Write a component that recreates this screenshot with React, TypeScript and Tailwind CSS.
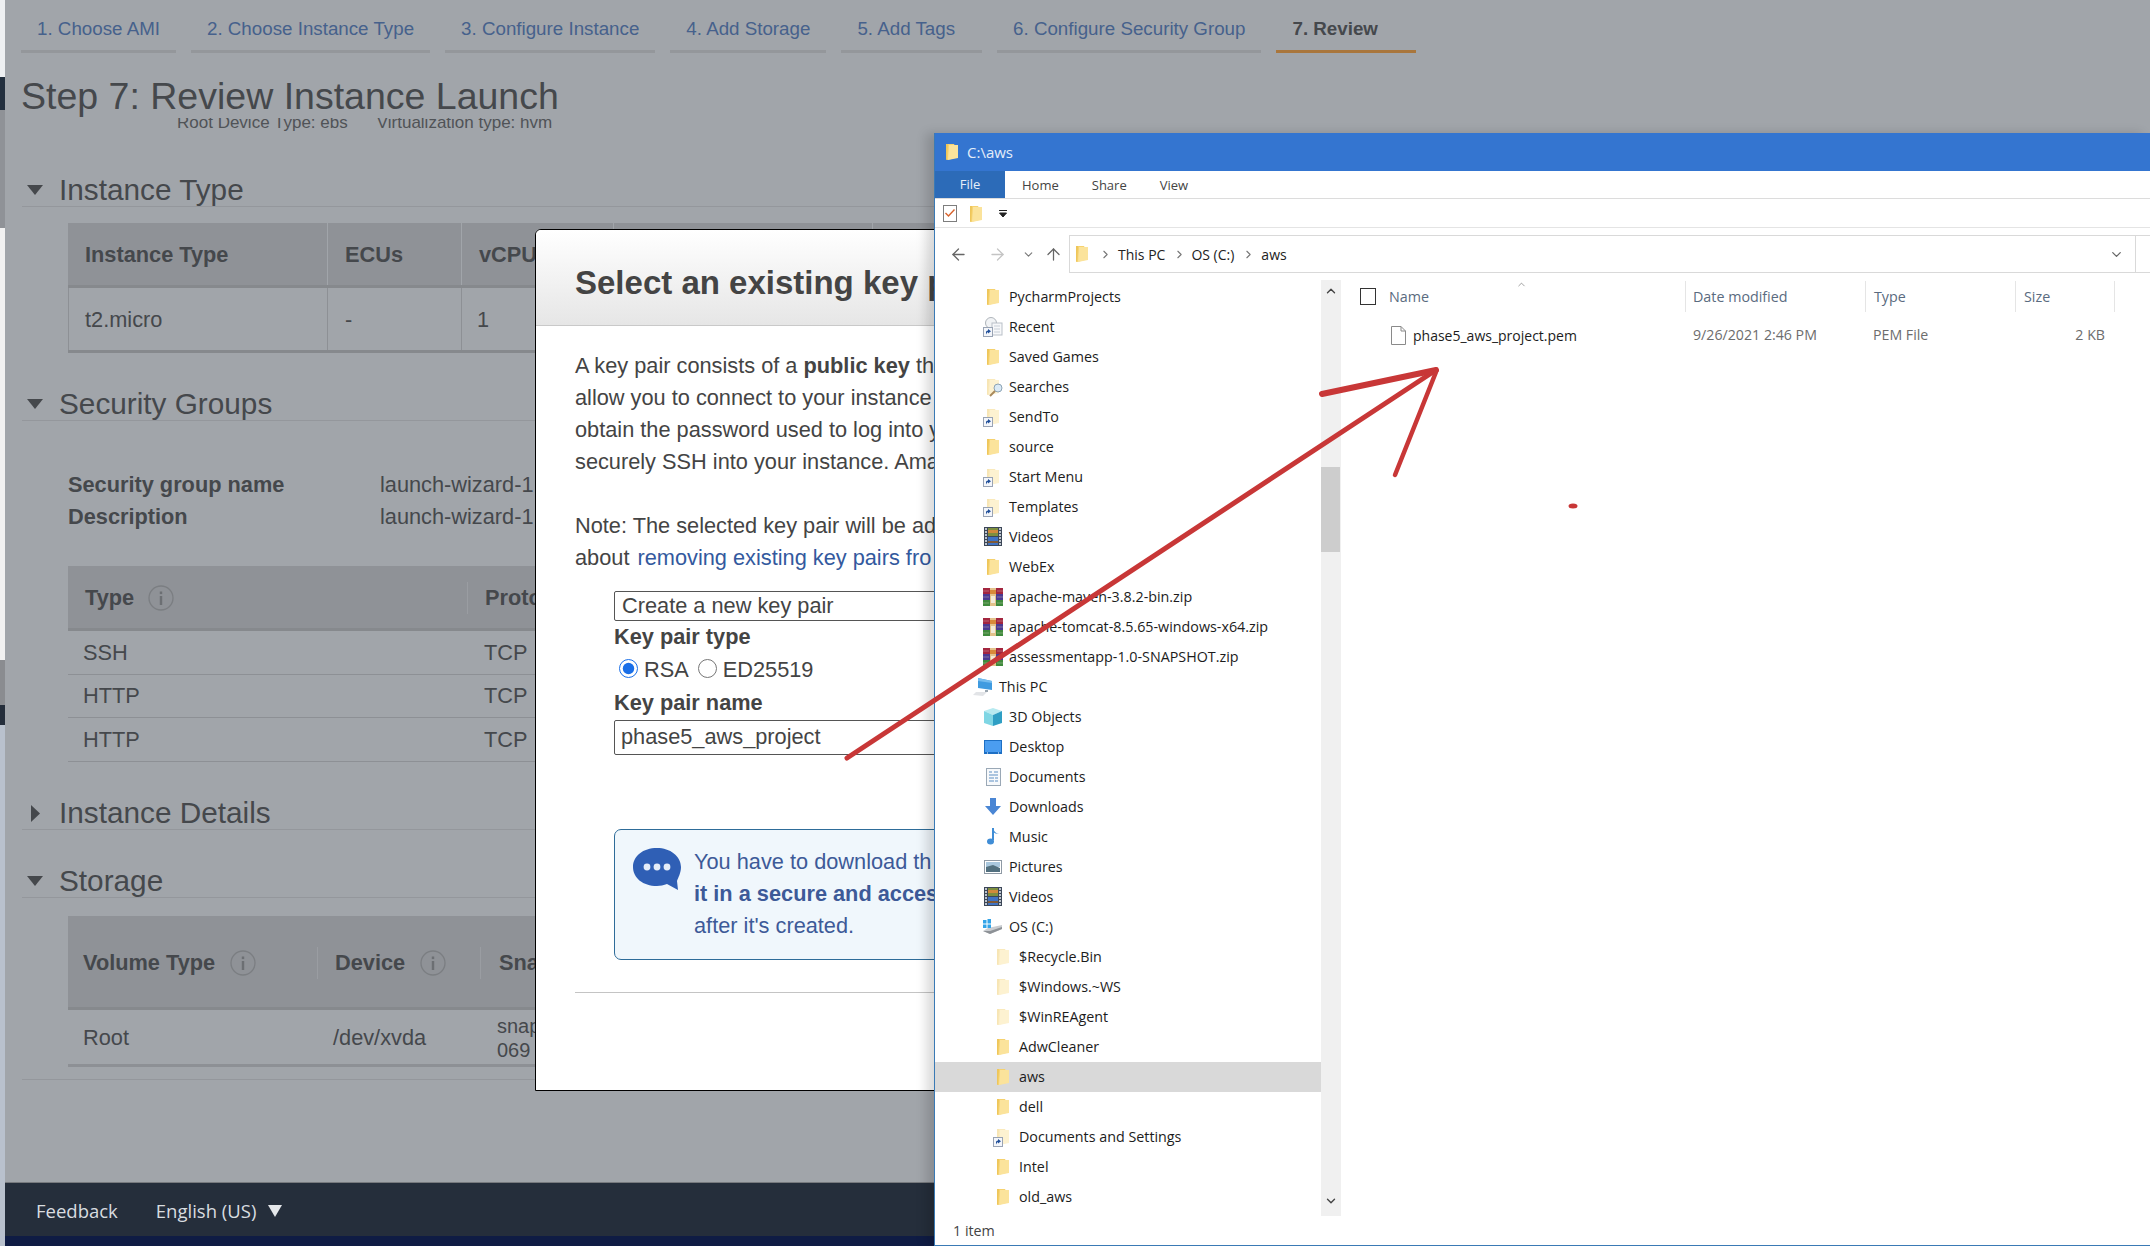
import type { ReactNode } from "react";
import { ArrowLeft, ArrowRight, ArrowUp, ChevronDown, ChevronRight, ChevronUp } from "lucide-react";

const tabs = ["1. Choose AMI", "2. Choose Instance Type", "3. Configure Instance", "4. Add Storage"];

const Folder = ({ pale = false }: { pale?: boolean }) => (
  <svg width="14" height="18" viewBox="0 0 14 18" className={pale ? "opacity-45" : ""}>
    <path d="M1 1 L4 1 L4 16 L1 17 Z" fill="#eec65a" />
    <path d="M3 1 L9 1 L10 3 L10 15 L2 17 Z" fill="#f6d26f" />
    <path d="M4 2 L13 2 L13 15 L3 17 Z" fill="#fbe39b" />
  </svg>
);

const Shortcut = () => (
  <svg width="10" height="10" viewBox="0 0 10 10" className="absolute left-0 bottom-0">
    <rect x="0.5" y="0.5" width="9" height="9" fill="#f4f6fa" stroke="#9aa4b4" />
    <path d="M3 7.5 L3 5 Q3 3.5 5 3.5 L5 2 L8 4.2 L5 6.4 L5 5 Q4 5 3 7.5 Z" fill="#1f4f9a" />
  </svg>
);

const FolderLink = () => (
  <span className="relative flex h-[20px] w-[20px] items-center justify-center">
    <Folder pale />
    <Shortcut />
  </span>
);

const Rar = () => (
  <svg width="20" height="18" viewBox="0 0 20 18">
    <rect x="0" y="0" width="20" height="6" fill="#a3263f" />
    <rect x="0" y="6" width="20" height="6" fill="#4a3a92" />
    <rect x="0" y="12" width="20" height="6" fill="#3f8a3c" />
    <rect x="7" y="0" width="6" height="18" fill="#e3c28b" />
    <rect x="7" y="2" width="6" height="4" fill="#d98a3a" />
    <rect x="8" y="8" width="4" height="7" fill="#f3ead8" />
    <path d="M0 3h6M14 3h6M0 9h6M14 9h6M0 15h6M14 15h6" stroke="#e9e2d0" strokeOpacity="0.35" />
  </svg>
);

const Film = () => (
  <svg width="18" height="19" viewBox="0 0 18 19">
    <rect width="18" height="19" fill="#3c4757" />
    <rect x="4" y="1" width="10" height="8" fill="#7e8f3e" />
    <rect x="4" y="3" width="10" height="3" fill="#d08a3c" />
    <rect x="4" y="10" width="10" height="8" fill="#3f73c4" />
    <rect x="4" y="14" width="10" height="2" fill="#7f5a38" />
    <path d="M1 2h2M1 5h2M1 8h2M1 11h2M1 14h2M1 17h2M15 2h2M15 5h2M15 8h2M15 11h2M15 14h2M15 17h2" stroke="#e8eef5" strokeWidth="1.3" />
  </svg>
);

const Recent = () => (
  <span className="relative flex h-[20px] w-[20px] items-center justify-center">
    <svg width="20" height="19" viewBox="0 0 20 19">
      <circle cx="8" cy="6" r="5.5" fill="#f1f3f5" stroke="#aeb4ba" />
      <rect x="9" y="6" width="10" height="12" fill="#f7f8fa" stroke="#b9c0c8" />
      <path d="M11 9h6M11 12h6M11 15h6" stroke="#c7ced6" />
    </svg>
    <Shortcut />
  </span>
);

const Searches = () => (
  <span className="relative flex h-[20px] w-[20px] items-center justify-center">
    <Folder pale />
    <svg width="14" height="14" viewBox="0 0 14 14" className="absolute right-0 bottom-0">
      <circle cx="9" cy="5" r="4" fill="#dbeaf6" stroke="#8ca3b5" />
      <path d="M6 8 L1 13" stroke="#a98a5c" strokeWidth="2" />
    </svg>
  </span>
);

const Pc = () => (
  <svg width="20" height="18" viewBox="0 0 20 18">
    <path d="M5 0 L19 3 L19 12 L5 10 Z" fill="#3f9be0" />
    <path d="M5 0 L19 3 L19 5 L5 3 Z" fill="#75bcee" />
    <path d="M12 12 L15 12 L15 14 L12 14 Z" fill="#9aa6b0" />
    <path d="M3 14 L14 14 L10 18 L0 17 Z" fill="#e2e4e7" />
  </svg>
);

const Cube = () => (
  <svg width="18" height="18" viewBox="0 0 18 18">
    <path d="M9 0 L18 3 L9 7 L0 3 Z" fill="#b7eaf0" />
    <path d="M0 3 L9 7 L9 18 L0 15 Z" fill="#7fd6e4" />
    <path d="M9 7 L18 3 L18 15 L9 18 Z" fill="#2f9fc4" />
  </svg>
);

const Desktop = () => (
  <svg width="18" height="14" viewBox="0 0 18 14">
    <rect width="18" height="14" fill="#1d6fc4" />
    <rect x="1" y="1" width="16" height="11" fill="#4b9df0" />
    <path d="M3 13h1M14 13h1" stroke="#ffffff" />
  </svg>
);

const Doc = () => (
  <svg width="15" height="18" viewBox="0 0 15 18">
    <rect x="0.5" y="0.5" width="14" height="17" fill="#f7f9fb" stroke="#9aa8b6" />
    <path d="M3 4h3M8 4h4M3 7h9M3 10h5M9 10h3M3 13h5M9 13h3" stroke="#5f90c4" strokeWidth="1.2" />
  </svg>
);

const Download = () => (
  <svg width="16" height="17" viewBox="0 0 16 17">
    <path d="M5 0 H11 V8 H16 L8 17 L0 8 H5 Z" fill="#4a86d4" />
  </svg>
);

const Music = () => (
  <svg width="12" height="17" viewBox="0 0 12 17">
    <path d="M6 0 L6 12" stroke="#3f8dd6" strokeWidth="2" />
    <path d="M6 0 Q7 5 12 6 Q8 6 6 4 Z" fill="#3f8dd6" />
    <ellipse cx="3.5" cy="13.5" rx="3.5" ry="3" fill="#3f8dd6" />
  </svg>
);

const Pictures = () => (
  <svg width="18" height="14" viewBox="0 0 18 14">
    <rect x="0.5" y="0.5" width="17" height="13" fill="#ffffff" stroke="#8f9aa5" />
    <rect x="2" y="2" width="14" height="5" fill="#a9c7dd" />
    <path d="M2 7 L9 5 L16 8 L16 12 L2 12 Z" fill="#52707f" />
  </svg>
);

const Drive = () => (
  <svg width="20" height="16" viewBox="0 0 20 16">
    <path d="M5 9 L19 6 L19 10 L7 15 L0 12 Z" fill="#c9ccd0" />
    <path d="M7 12 L19 8 L19 10 L7 15 L0 12 Z" fill="#8d9196" />
    <rect x="0" y="1" width="3.5" height="3.5" fill="#33a4e8" />
    <rect x="4.5" y="0" width="3.5" height="4.5" fill="#33a4e8" />
    <rect x="0" y="5.5" width="3.5" height="3.5" fill="#33a4e8" />
    <rect x="4.5" y="5.5" width="3.5" height="3.5" fill="#33a4e8" />
  </svg>
);

const Triangle = ({ open = true }: { open?: boolean }) =>
  open ? (
    <svg width="16" height="10" viewBox="0 0 16 10">
      <path d="M0 0 H16 L8 10 Z" fill="#45484c" />
    </svg>
  ) : (
    <svg width="16" height="17" viewBox="0 0 16 17">
      <path d="M4 0 L13 8.5 L4 17 Z" fill="#45484c" />
    </svg>
  );

const InfoIcon = () => (
  <svg width="26" height="26" viewBox="0 0 26 26" className="shrink-0">
    <circle cx="13" cy="13" r="12" fill="none" stroke="#7b7e82" strokeWidth="1.3" />
    <rect x="11.8" y="6.5" width="2.4" height="2.6" fill="#6c6f73" />
    <rect x="11.8" y="11" width="2.4" height="9" fill="#6c6f73" />
  </svg>
);

const Heading = ({ title, open = true, className }: { title: string; open?: boolean; className: string }) => (
  <div className={`ml-[17px] flex h-[42px] items-center border-b border-[#94979c] pt-[9px] text-[29.75px] text-[#45484c] ${className}`}>
    <span className="flex w-[37px] justify-center pr-[11px]">
      <Triangle open={open} />
    </span>
    {title}
  </div>
);

type Row = { label: string; icon: ReactNode; level?: number; selected?: boolean };

const treeRows: Row[] = [
  { label: "PycharmProjects", icon: <Folder /> },
  { label: "Recent", icon: <Recent /> },
  { label: "Saved Games", icon: <Folder /> },
  { label: "Searches", icon: <Searches /> },
  { label: "SendTo", icon: <FolderLink /> },
  { label: "source", icon: <Folder /> },
  { label: "Start Menu", icon: <FolderLink /> },
  { label: "Templates", icon: <FolderLink /> },
  { label: "Videos", icon: <Film /> },
  { label: "WebEx", icon: <Folder /> },
  { label: "apache-maven-3.8.2-bin.zip", icon: <Rar /> },
  { label: "apache-tomcat-8.5.65-windows-x64.zip", icon: <Rar /> },
  { label: "assessmentapp-1.0-SNAPSHOT.zip", icon: <Rar /> },
  { label: "This PC", icon: <Pc />, level: 0 },
  { label: "3D Objects", icon: <Cube /> },
  { label: "Desktop", icon: <Desktop /> },
  { label: "Documents", icon: <Doc /> },
  { label: "Downloads", icon: <Download /> },
  { label: "Music", icon: <Music /> },
  { label: "Pictures", icon: <Pictures /> },
  { label: "Videos", icon: <Film /> },
  { label: "OS (C:)", icon: <Drive /> },
  { label: "$Recycle.Bin", icon: <Folder pale />, level: 2 },
  { label: "$Windows.~WS", icon: <Folder pale />, level: 2 },
  { label: "$WinREAgent", icon: <Folder pale />, level: 2 },
  { label: "AdwCleaner", icon: <Folder />, level: 2 },
  { label: "aws", icon: <Folder />, level: 2, selected: true },
  { label: "dell", icon: <Folder />, level: 2 },
  { label: "Documents and Settings", icon: <FolderLink />, level: 2 },
  { label: "Intel", icon: <Folder />, level: 2 },
  { label: "old_aws", icon: <Folder />, level: 2 },
];

const TreeRow = ({ label, icon, level = 1, selected }: Row) => (
  <div
    className={`flex h-[30px] items-center text-[#1c1c1c] ${selected ? "bg-[#d9d9d9]" : ""} ${
      level === 0 ? "pl-[38px]" : level === 1 ? "pl-[48px]" : "pl-[58px]"
    }`}
  >
    <span className="mr-[6px] flex w-[20px] justify-center">{icon}</span>
    {label}
  </div>
);

function Page() {
  return (
    <div className="flex h-[1246px] flex-1 flex-col bg-[#a1a5aa] font-['Liberation_Sans',sans-serif]">
      <nav className="flex h-[53px] gap-[15px] pl-[16px] text-[18.75px] text-[#46618c]">
        {tabs.map((t) => (
          <div key={t} className="flex h-[53px] items-center border-b-[3px] border-[#94979b] px-[16px] pt-[8px]">
            {t}
          </div>
        ))}
        <div className="flex h-[53px] items-center border-b-[3px] border-[#94979b] pl-[16px] pr-[27px] pt-[8px]">5. Add Tags</div>
        <div className="flex h-[53px] items-center border-b-[3px] border-[#94979b] px-[16px] pt-[8px]">
          6. Configure Security Group
        </div>
        <div className="flex h-[53px] items-center border-b-[3px] border-[#a9763c] pl-[16px] pr-[38px] pt-[8px] font-bold text-[#45484c]">
          7. Review
        </div>
      </nav>

      <h1 className="ml-[16px] mt-[20px] h-[44px] text-[37.5px] leading-[46px] text-[#45484c]">
        Step 7: Review Instance Launch
      </h1>
      <div className="ml-[172px] mt-[1px] flex h-[16px] gap-[29px] overflow-hidden text-[17px] leading-[16px] text-[#505357]">
        <span className="-mt-[3px]">Root Device Type: ebs</span>
        <span className="-mt-[3px]">Virtualization type: hvm</span>
      </div>

      <Heading title="Instance Type" className="mt-[31px]" />
      <div className="ml-[63px] mt-[16px] h-[130px] w-[1400px] border-b-[3px] border-[#86898d] text-[#45484c]">
        <div className="flex h-[65px] items-center border-b-[3px] border-[#86898d] bg-[#8f9297] text-[21.75px] font-bold">
          <span className="flex h-full w-[260px] items-center border-r border-[#a1a5aa] pl-[17px] pt-[3px]">Instance Type</span>
          <span className="flex h-full w-[134px] items-center border-r border-[#a1a5aa] pl-[17px] pt-[3px]">ECUs</span>
          <span className="flex h-full w-[152px] items-center border-r border-[#a1a5aa] pl-[17px] pt-[3px]">vCPUs</span>
          <span className="flex h-full w-[259px] items-center border-r border-[#a1a5aa] pl-[14px] pt-[3px]">Memory (GiB)</span>
        </div>
        <div className="flex h-[62px] items-center text-[21.75px]">
          <span className="flex h-full w-[260px] items-center border-x border-[#8d9095] pl-[16px] pt-[3px]">t2.micro</span>
          <span className="flex h-full w-[134px] items-center border-r border-[#8d9095] pl-[17px] pt-[3px]">-</span>
          <span className="flex h-full w-[152px] items-center border-r border-[#8d9095] pl-[15px] pt-[3px]">1</span>
        </div>
      </div>

      <Heading title="Security Groups" className="mt-[26px]" />
      <div className="ml-[63px] mt-[53px] flex flex-col gap-[10px] text-[21.75px] leading-[22px] text-[#45484c]">
        <div className="flex">
          <span className="w-[312px] font-bold">Security group name</span>
          launch-wizard-1
        </div>
        <div className="flex">
          <span className="w-[312px] font-bold">Description</span>
          launch-wizard-1
        </div>
      </div>
      <div className="ml-[63px] mt-[38px] w-[1400px] text-[21.75px] text-[#45484c]">
        <div className="flex h-[65px] items-center border-b-[3px] border-[#86898d] bg-[#8f9297] pt-[2px] font-bold">
          <span className="flex w-[400px] items-center gap-[14px] border-r border-[#9a9da2] pl-[17px]">
            Type <InfoIcon />
          </span>
          <span className="pl-[17px]">Protocol</span>
        </div>
        {["SSH", "HTTP", "HTTP"].map((t, i) => (
          <div key={i} className="flex h-[43.5px] items-center border-b border-[#8d9095] pt-[2px]">
            <span className="w-[416px] pl-[15px]">{t}</span>TCP
          </div>
        ))}
      </div>

      <Heading title="Instance Details" open={false} className="mt-[26.5px]" />
      <Heading title="Storage" className="mt-[26px]" />
      <div className="ml-[63px] mt-[18px] w-[1400px] text-[#45484c]">
        <div className="flex h-[94px] items-center border-b-[3px] border-[#86898d] bg-[#8f9297] pt-[3px] text-[21.75px] font-bold">
          <span className="flex w-[250px] items-center gap-[15px] border-r border-[#9a9da2] pl-[15px]">
            Volume Type <InfoIcon />
          </span>
          <span className="flex w-[163px] items-center gap-[15px] border-r border-[#9a9da2] pl-[17px]">
            Device <InfoIcon />
          </span>
          <span className="pl-[18px]">Snapshot</span>
        </div>
        <div className="flex h-[57px] items-center border-b-[3px] border-[#8d9095] pt-[2px] text-[21.75px]">
          <span className="w-[250px] pl-[15px]">Root</span>
          <span className="w-[179px] pl-[15px]">/dev/xvda</span>
          <span className="text-[20px] leading-[24px]">
            snap-
            <br />
            069
          </span>
        </div>
      </div>
      <div className="ml-[17px] mt-[12px] h-px bg-[#94979c]" />

      <div className="mt-auto">
        <footer className="flex h-[54px] items-center border-t border-[#777a7e] bg-[#252e3b] pl-[31px] pt-[2px] font-['Open_Sans',sans-serif] text-[18.5px] text-[#d9dde0]">
          <span>Feedback</span>
          <span className="ml-[38px]">English (US)</span>
          <svg width="14" height="12" viewBox="0 0 14 12" className="ml-[12px]">
            <path d="M0 0 H14 L7 12 Z" fill="#e4e7ea" />
          </svg>
        </footer>
        <div className="h-[10px] bg-[#0f1c44]" />
      </div>
    </div>
  );
}

function KeyPairModal() {
  return (
    <div className="absolute left-[535px] top-[229px] h-[862px] w-[420px] overflow-hidden rounded-tl-[6px] border border-black bg-white font-['Liberation_Sans',sans-serif] text-[#444]">
      <div className="flex h-[96px] items-center whitespace-nowrap border-b border-[#c9c9c9] bg-gradient-to-b from-white to-[#e6e6e6] pl-[39px] pt-[11px] text-[33px] font-bold">
        Select an existing key p
      </div>
      <div className="whitespace-nowrap pl-[39px] pt-[24px] text-[21.75px] leading-[32px]">
        <div>
          A key pair consists of a <b>public key</b> th
        </div>
        <div>allow you to connect to your instance</div>
        <div>obtain the password used to log into y</div>
        <div>securely SSH into your instance. Ama</div>
        <div className="mt-[32px]">Note: The selected key pair will be ad</div>
        <div>
          about <span className="ml-[2px] text-[#33599e]">removing existing key pairs fro</span>
        </div>
      </div>
      <div className="ml-[78px] whitespace-nowrap text-[21.75px]">
        <div className="mt-[17px] flex h-[30px] items-center rounded-[2px] border border-[#555] pl-[7px]">
          Create a new key pair
        </div>
        <div className="mt-[4px] font-bold leading-[24px]">Key pair type</div>
        <div className="mt-[7px] flex h-[26px] items-center">
          <input type="radio" name="kp" defaultChecked className="ml-[5px] -mt-[2px] h-[19px] w-[19px] accent-[#1a6fe8]" />
          <span className="ml-[6px] mt-[2px]">RSA</span>
          <input type="radio" name="kp" className="ml-[9px] -mt-[2px] h-[19px] w-[19px]" />
          <span className="ml-[6px] mt-[2px]">ED25519</span>
        </div>
        <div className="mt-[9px] font-bold leading-[24px]">Key pair name</div>
        <div className="mt-[5px] flex h-[35px] items-center rounded-[2px] border border-[#555] pl-[6px]">
          phase5_aws_project
        </div>
        <div className="mt-[74px] flex h-[131px] rounded-l-[7px] border border-[#2e6c99] bg-[#f0f7fc] pl-[18px] pt-[18px] leading-[32px] text-[#3d5a98]">
          <svg width="48" height="42" viewBox="0 0 48 42" className="shrink-0">
            <path d="M24 0 C37 0 48 8 48 19 C48 25 45 30 44 33 L45 42 L34 36 C31 37 27 38 24 38 C10 38 0 30 0 19 C0 8 10 0 24 0 Z" fill="#2f5fb5" />
            <circle cx="14" cy="19" r="3.4" fill="#e4ecf8" />
            <circle cx="24" cy="19" r="3.4" fill="#e4ecf8" />
            <circle cx="34" cy="19" r="3.4" fill="#e4ecf8" />
          </svg>
          <div className="ml-[13px] -mt-[2px]">
            <div>You have to download th</div>
            <div className="font-bold">it in a secure and acces</div>
            <div>after it's created.</div>
          </div>
        </div>
      </div>
      <div className="ml-[39px] mt-[32px] h-px bg-[#c4c4c4]" />
    </div>
  );
}

function Explorer() {
  return (
    <div className="absolute left-[934px] top-[133px] flex h-[1113px] w-[1216px] flex-col border-b border-l border-[#3a7ab5] bg-white font-['Open_Sans',sans-serif] text-[14.3px] shadow-[-8px_0_10px_rgba(0,0,0,0.14)]">
      <div className="flex h-[38px] items-center bg-[#3475d0] pl-[10px] text-[15px] text-[#e3edf9]">
        <Folder />
        <span className="ml-[8px]">C:\aws</span>
      </div>
      <div className="flex h-[28px] items-center border-b border-[#dcdcdc] text-[13px] text-[#444]">
        <span className="flex h-full w-[70px] items-center justify-center bg-[#2c6bb8] pt-[1px] text-[#e6eef8]">File</span>
        <span className="ml-[17px] pt-[2px]">Home</span>
        <span className="ml-[33px] pt-[2px]">Share</span>
        <span className="ml-[33px] pt-[2px]">View</span>
      </div>
      <div className="flex h-[29px] items-center gap-[12px] border-b border-[#e4e4e4] pl-[8px] pt-[1px]">
        <svg width="14" height="17" viewBox="0 0 14 17">
          <rect x="0.5" y="0.5" width="13" height="16" fill="#fff" stroke="#7d7d7d" />
          <path d="M2.5 8 L5.5 11 L11.5 4.5" fill="none" stroke="#d8622c" strokeWidth="1.4" />
        </svg>
        <Folder />
        <svg width="8" height="7" viewBox="0 0 8 7" className="ml-[4px]">
          <path d="M0 0.5 H8 M0.5 3 H7.5 L4 7 Z" stroke="#222" fill="#222" />
        </svg>
      </div>
      <div className="flex h-[52px] items-center">
        <ArrowLeft size={19} strokeWidth={1.6} className="ml-[14px] text-[#666]" />
        <ArrowRight size={19} strokeWidth={1.6} className="ml-[20px] text-[#c4c4c4]" />
        <ChevronDown size={13} strokeWidth={2} className="ml-[15px] text-[#777]" />
        <ArrowUp size={19} strokeWidth={1.6} className="ml-[9px] text-[#666]" />
        <div className="ml-[6px] flex h-[38px] flex-1 items-center border-y border-l border-[#d9d9d9] pl-[5px] text-[14px] text-[#222]">
          <Folder />
          <ChevronRight size={13} className="ml-[10px] text-[#777]" />
          <span className="ml-[6px]">This PC</span>
          <ChevronRight size={13} className="ml-[8px] text-[#777]" />
          <span className="ml-[5px]">OS (C:)</span>
          <ChevronRight size={13} className="ml-[8px] text-[#777]" />
          <span className="ml-[6px]">aws</span>
          <ChevronDown size={15} className="ml-auto mr-[11px] text-[#666]" />
          <span className="h-full w-[15px] border-l border-[#d9d9d9]" />
        </div>
      </div>
      <div className="flex h-[936px]">
        <div className="w-[386px] overflow-hidden pt-[1.5px]">
          {treeRows.map((r, i) => (
            <TreeRow key={i} {...r} />
          ))}
        </div>
        <div className="relative w-[20px] bg-[#f0f0f0]">
          <ChevronUp size={14} strokeWidth={2.4} className="absolute left-[3px] top-[4px] text-[#444]" />
          <div className="absolute left-0 top-[187px] h-[85px] w-[19px] bg-[#cdcdcd]" />
          <ChevronDown size={14} strokeWidth={2.4} className="absolute bottom-[8px] left-[3px] text-[#444]" />
        </div>
        <div className="flex-1">
          <div className="relative flex h-[32px] items-center pt-[1px] text-[14.3px] text-[#5a6b80]">
            <span className="ml-[19px] h-[17px] w-[16px] border border-[#333]" />
            <span className="ml-[13px] w-[296px]">Name</span>
            <ChevronUp size={11} strokeWidth={1.2} className="absolute left-[175px] top-[-1px] text-[#555]" />
            <span className="flex h-full w-[180px] items-center border-l border-[#e5e5e5] pl-[7px]">Date modified</span>
            <span className="flex h-full w-[150px] items-center border-l border-[#e5e5e5] pl-[8px]">Type</span>
            <span className="flex h-full w-[100px] items-center border-x border-[#e5e5e5] pl-[8px]">Size</span>
          </div>
          <div className="mt-[8px] flex h-[30px] items-center text-[14.2px] text-[#6d6d6d]">
            <svg width="15" height="19" viewBox="0 0 15 19" className="ml-[50px]">
              <path d="M0.5 0.5 H10 L14.5 5 V18.5 H0.5 Z M10 0.5 V5 H14.5" fill="#fff" stroke="#8a8a8a" />
            </svg>
            <span className="ml-[7px] w-[280px] text-[14px] text-[#1c1c1c]">phase5_aws_project.pem</span>
            <span className="w-[180px]">9/26/2021 2:46 PM</span>
            <span className="w-[150px]">PEM File</span>
            <span className="w-[82px] text-right">2 KB</span>
          </div>
        </div>
      </div>
      <div className="flex h-[29px] items-center pl-[18px] text-[#444]">1 item</div>
    </div>
  );
}

export default function App() {
  return (
    <div className="relative flex h-[1246px] w-[2150px] overflow-hidden">
      <div className="flex w-[5px] shrink-0 flex-col">
        <div className="h-[77px] bg-[#eef0f2]" />
        <div className="h-[33px] bg-[#232f3e]" />
        <div className="h-[118px] bg-[#8f9297]" />
        <div className="h-[432px] bg-[#f1f1f1]" />
        <div className="h-[45px] bg-[#8a8c90]" />
        <div className="h-[20px] bg-[#252e3b]" />
        <div className="flex-1 bg-[#b9c1cd]" />
      </div>
      <Page />
      <KeyPairModal />
      <Explorer />
      <svg width="2150" height="1246" viewBox="0 0 2150 1246" className="pointer-events-none absolute left-0 top-0">
        <g stroke="#c83737" fill="none" strokeLinecap="round" strokeLinejoin="round">
          <path d="M847 758 L1436 370" strokeWidth="5" />
          <path d="M1322 394 L1436 370" strokeWidth="6" />
          <path d="M1436 372 L1395 475" strokeWidth="4.5" />
        </g>
        <ellipse cx="1573" cy="506" rx="4.5" ry="2.5" fill="#c83737" />
      </svg>
    </div>
  );
}
